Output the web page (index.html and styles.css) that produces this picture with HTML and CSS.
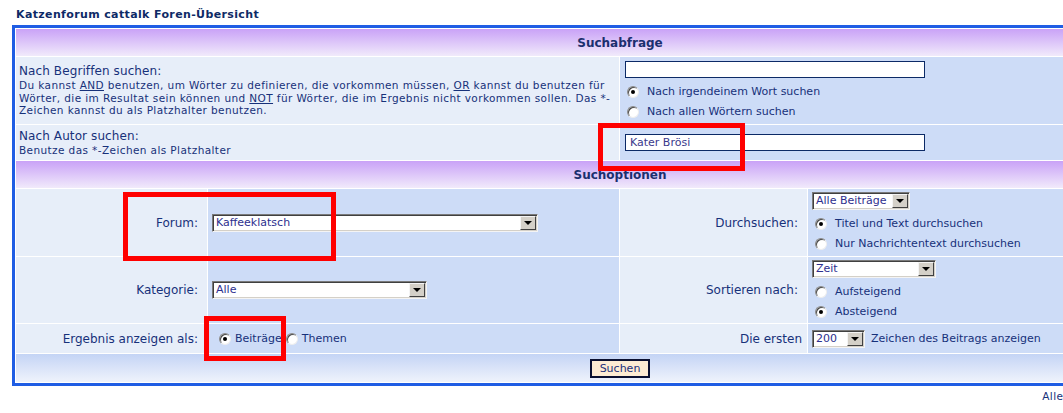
FILE: index.html
```html
<!DOCTYPE html>
<html lang="de">
<head>
    <meta charset="UTF-8">
    <title>Katzenforum cattalk - Suche</title>
    <link rel="stylesheet" href="styles.css">
</head>

<body>
    <div class="page">
        <div class="nav">Katzenforum cattalk Foren-Übersicht</div>

        <table class="forumline">
            <colgroup>
                <col class="c1">
                <col class="c2">
                <col class="c3">
                <col class="c4">
            </colgroup>
            <tr>
                <th colspan="4" class="cat">Suchabfrage</th>
            </tr>
            <tr class="r-query">
                <td colspan="2" class="row1">
                    <div class="gen">Nach Begriffen suchen:</div>
                    <div class="gensmall">Du kannst <u>AND</u> benutzen, um Wörter zu definieren, die vorkommen müssen, <u>OR</u> kannst du benutzen für Wörter, die im Resultat sein können und <u>NOT</u> für Wörter, die im Ergebnis nicht vorkommen sollen. Das *-Zeichen kannst du als Platzhalter benutzen.</div>
                </td>
                <td colspan="2" class="row2">
                    <input class="post" type="text" value="">
                    <div class="opt"><span class="radio on"></span>Nach irgendeinem Wort suchen</div>
                    <div class="opt"><span class="radio"></span>Nach allen Wörtern suchen</div>
                </td>
            </tr>
            <tr class="r-author">
                <td colspan="2" class="row1">
                    <div class="gen">Nach Autor suchen:</div>
                    <div class="gensmall">Benutze das *-Zeichen als Platzhalter</div>
                </td>
                <td colspan="2" class="row2">
                    <input class="post" type="text" value="Kater Brösi">
                </td>
            </tr>
            <tr>
                <th colspan="4" class="cat">Suchoptionen</th>
            </tr>
            <tr class="r-forum">
                <td class="row1 label">Forum:</td>
                <td class="row2">
                    <div class="select w-forum"><span class="sel-text">Kaffeeklatsch</span><span class="sel-btn"></span></div>
                </td>
                <td class="row1 label">Durchsuchen:</td>
                <td class="row2">
                    <div class="select w-fields stacked"><span class="sel-text">Alle Beiträge</span><span class="sel-btn"></span></div>
                    <div class="opt"><span class="radio on"></span>Titel und Text durchsuchen</div>
                    <div class="opt"><span class="radio"></span>Nur Nachrichtentext durchsuchen</div>
                </td>
            </tr>
            <tr class="r-cat">
                <td class="row1 label">Kategorie:</td>
                <td class="row2">
                    <div class="select w-cat"><span class="sel-text">Alle</span><span class="sel-btn"></span></div>
                </td>
                <td class="row1 label">Sortieren nach:</td>
                <td class="row2">
                    <div class="select w-sort stacked"><span class="sel-text">Zeit</span><span class="sel-btn"></span></div>
                    <div class="opt"><span class="radio"></span>Aufsteigend</div>
                    <div class="opt"><span class="radio on"></span>Absteigend</div>
                </td>
            </tr>
            <tr class="r-show">
                <td class="row1 label">Ergebnis anzeigen als:</td>
                <td class="row2">
                    <div class="inline-opts">
                        <span class="radio on"></span><span class="opt-text">Beiträge</span>
                        <span class="radio"></span><span class="opt-text">Themen</span>
                    </div>
                </td>
                <td class="row1 label short">Die ersten</td>
                <td class="row2">
                    <div class="inline-opts">
                        <div class="select w-chars"><span class="sel-text">200</span><span class="sel-btn"></span></div>
                        <span class="opt-text after">Zeichen des Beitrags anzeigen</span>
                    </div>
                </td>
            </tr>
            <tr class="r-submit">
                <td colspan="4" class="catBottom"><button class="liteoption">Suchen</button></td>
            </tr>
        </table>

        <div class="footnote">Alle Zeiten sind GMT + 1 Stunde</div>

        <!-- markierungen -->
        <div class="mark m-author"></div>
        <div class="mark m-forum"></div>
        <div class="mark m-show"></div>
    </div>
</body>
</html>
```

FILE: styles.css
```css
body {
    margin: 0;
    background-color: #ffffff;
    font-family: "DejaVu Sans", Verdana, sans-serif;
    color: #17317a;
    overflow: hidden;
}

.page {
    position: relative;
    width: 1216px;
    padding: 8px 0 0 12px;
}

.nav {
    font-size: 11px;
    font-weight: bold;
    line-height: 13px;
    letter-spacing: 0.37px;
    color: #0e2a66;
    padding: 0 4px 4px;
}

.forumline {
    width: 1216px;
    table-layout: fixed;
    border: 3px solid #1f5de4;
    border-spacing: 1px;
    background-color: #ffffff;
}

.c1 { width: 191px; }
.c2 { width: 411px; }
.c3 { width: 187px; }

td, th {
    box-sizing: border-box;
    padding: 0 4px;
    vertical-align: middle;
    font-size: 11px;
    line-height: 14px;
}

td.row1:first-child {
    padding-left: 3px;
}

th.cat {
    height: 27px;
    font-size: 12px;
    font-weight: bold;
    color: #1b2f6e;
    background: linear-gradient(#c9a2f7, #f1eafb);
}

.row1 {
    background-color: #e7eef9;
}

.row2 {
    background-color: #cddcf7;
}

.r-query td { height: 67px; }
.r-author td { height: 35px; }
.r-forum td { height: 67px; }
.r-cat td { height: 66px; }
.r-show td { height: 29px; }

.gen {
    font-size: 12px;
    line-height: 15px;
    letter-spacing: 0.1px;
}

.gensmall {
    font-size: 10.5px;
    line-height: 12.5px;
    letter-spacing: 0.4px;
}

.label {
    text-align: right;
    font-size: 12px;
    padding-right: 9px;
    white-space: nowrap;
}

.label.short {
    padding-right: 5px;
}

input.post {
    display: block;
    box-sizing: border-box;
    width: 300px;
    height: 17px;
    margin: 2px 0 4px 1px;
    padding: 0 4px;
    border: 1px solid #0c2a66;
    background-color: #ffffff;
    font-family: inherit;
    font-size: 11px;
    color: #3b3a8c;
}

.r-author input.post {
    margin: 0 0 0 1px;
}

.opt {
    display: flex;
    align-items: center;
    height: 20px;
    font-size: 11px;
}

.radio {
    position: relative;
    display: inline-block;
    box-sizing: border-box;
    flex: none;
    width: 12px;
    height: 12px;
    margin: 0 8px 0 3px;
    border-radius: 50%;
    border: 1px solid;
    border-color: #8a8a8a #eeeeee #eeeeee #8a8a8a;
    background-color: #ffffff;
    box-shadow: inset 1px 1px 0 #4a4a4a;
}

.radio.on::after {
    content: "";
    position: absolute;
    left: 3px;
    top: 3px;
    width: 4px;
    height: 4px;
    border-radius: 50%;
    background-color: #000000;
}

.select {
    display: flex;
    align-items: center;
    box-sizing: border-box;
    height: 18px;
    border: 1px solid;
    border-color: #7a7a7a #f4f4f4 #f4f4f4 #7a7a7a;
    box-shadow: inset 1px 1px 0 #404040, inset -1px -1px 0 #d4d0c8;
    background-color: #ffffff;
    font-size: 11px;
    color: #2d2f8e;
}

.select.stacked {
    margin: 1px 0 4px;
}

.sel-text {
    flex: 1;
    padding-left: 3px;
    white-space: nowrap;
}

.sel-btn {
    position: relative;
    box-sizing: border-box;
    width: 16px;
    height: 14px;
    margin-right: 1px;
    border: 1px solid;
    border-color: #f4f4f4 #404040 #404040 #f4f4f4;
    background-color: #d4d0c8;
}

.sel-btn::after {
    content: "";
    position: absolute;
    left: 3px;
    top: 4px;
    border-left: 4px solid transparent;
    border-right: 4px solid transparent;
    border-top: 4px solid #000000;
}

.w-forum { width: 326px; }
.w-cat { width: 215px; }
.w-fields { width: 98px; }
.w-sort { width: 124px; }
.w-chars { width: 53px; }

.inline-opts {
    display: flex;
    align-items: center;
    font-size: 11px;
}

.inline-opts .radio {
    margin: 0 4px 0 0;
}

.inline-opts .radio:first-child {
    margin-left: 7px;
}

.opt-text {
    margin-right: 4px;
}

.opt-text.after {
    margin-left: 6px;
}

.catBottom {
    height: 28px;
    text-align: center;
    background: linear-gradient(#c4d4f5, #eff3fc);
}

.liteoption {
    box-sizing: border-box;
    width: 60px;
    height: 19px;
    padding: 0;
    border: 2px solid #0a1030;
    background-color: #fdecd3;
    font-family: inherit;
    font-size: 11px;
    color: #1b2f7a;
}

.footnote {
    text-align: right;
    font-size: 10.5px;
    letter-spacing: 0.4px;
    line-height: 13px;
    padding: 4px 2px 0 0;
}

.mark {
    position: absolute;
    box-sizing: border-box;
    border: 5px solid #ff0000;
}

.m-author { left: 598px; top: 123px; width: 147px; height: 48px; }
.m-forum { left: 123px; top: 192px; width: 213px; height: 69px; }
.m-show { left: 204px; top: 316px; width: 82px; height: 45px; }
```
